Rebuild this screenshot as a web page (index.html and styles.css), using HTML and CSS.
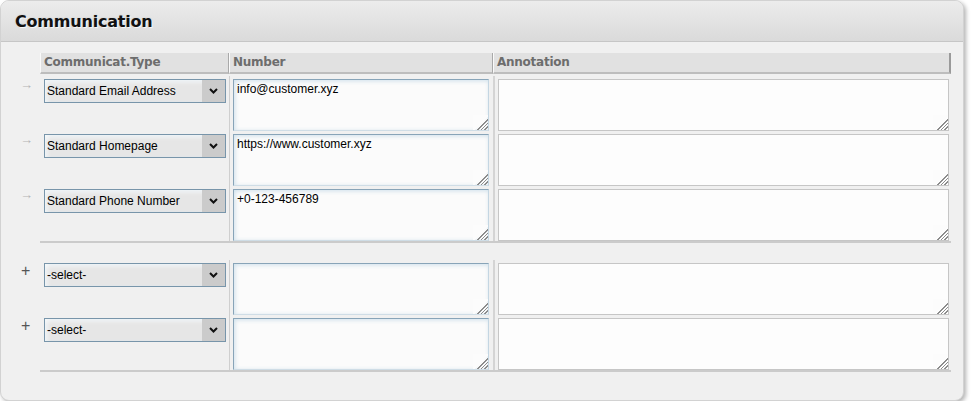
FILE: index.html
```html
<!DOCTYPE html>
<html>
<head>
<meta charset="utf-8">
<link rel="stylesheet" href="styles.css">
</head>
<body>
<div class="panel">
  <div class="panel-header"><h1 class="title">Communication</h1></div>
  <div class="panel-body">
    <div class="grid head">
      <div class="gutter"></div>
      <div class="hcell">Communicat.Type</div>
      <div class="hcell">Number</div>
      <div class="hcell last">Annotation</div>
    </div>

    <div class="group">
      <div class="grid row">
        <div class="gutter"><span class="arrow">&rarr;</span></div>
        <div class="c1"><div class="sel"><span class="sel-text">Standard Email Address</span><span class="sel-btn"><svg width="9" height="6" viewBox="0 0 9 6"><path d="M1 1 L4.5 4.5 L8 1" fill="none" stroke="#111" stroke-width="2"/></svg></span></div></div>
        <div class="c2"><textarea class="num">info@customer.xyz</textarea></div>
        <div class="c3"><textarea class="ann"></textarea></div>
      </div>
      <div class="grid row">
        <div class="gutter"><span class="arrow">&rarr;</span></div>
        <div class="c1"><div class="sel"><span class="sel-text">Standard Homepage</span><span class="sel-btn"><svg width="9" height="6" viewBox="0 0 9 6"><path d="M1 1 L4.5 4.5 L8 1" fill="none" stroke="#111" stroke-width="2"/></svg></span></div></div>
        <div class="c2"><textarea class="num">https://www.customer.xyz</textarea></div>
        <div class="c3"><textarea class="ann"></textarea></div>
      </div>
      <div class="grid row">
        <div class="gutter"><span class="arrow">&rarr;</span></div>
        <div class="c1"><div class="sel"><span class="sel-text">Standard Phone Number</span><span class="sel-btn"><svg width="9" height="6" viewBox="0 0 9 6"><path d="M1 1 L4.5 4.5 L8 1" fill="none" stroke="#111" stroke-width="2"/></svg></span></div></div>
        <div class="c2"><textarea class="num">+0-123-456789</textarea></div>
        <div class="c3"><textarea class="ann"></textarea></div>
      </div>
    </div>
    <div class="sep"></div>

    <div class="group second">
      <div class="grid row">
        <div class="gutter"><span class="plus">+</span></div>
        <div class="c1"><div class="sel"><span class="sel-text">-select-</span><span class="sel-btn"><svg width="9" height="6" viewBox="0 0 9 6"><path d="M1 1 L4.5 4.5 L8 1" fill="none" stroke="#111" stroke-width="2"/></svg></span></div></div>
        <div class="c2"><textarea class="num"></textarea></div>
        <div class="c3"><textarea class="ann"></textarea></div>
      </div>
      <div class="grid row">
        <div class="gutter"><span class="plus">+</span></div>
        <div class="c1"><div class="sel"><span class="sel-text">-select-</span><span class="sel-btn"><svg width="9" height="6" viewBox="0 0 9 6"><path d="M1 1 L4.5 4.5 L8 1" fill="none" stroke="#111" stroke-width="2"/></svg></span></div></div>
        <div class="c2"><textarea class="num"></textarea></div>
        <div class="c3"><textarea class="ann"></textarea></div>
      </div>
    </div>
    <div class="sep"></div>
  </div>
</div>
</body>
</html>
```

FILE: styles.css
```css
html, body {
  margin: 0;
  padding: 0;
  background: #ffffff;
}
body {
  font-family: "Liberation Sans", Arial, sans-serif;
  font-size: 12px;
}
.panel {
  width: 962px;
  height: 399px;
  background: #f0f0f0;
  border: 1px solid #d2d2d2;
  border-radius: 9px;
  box-shadow: 2px 2px 4px rgba(0,0,0,0.3);
  overflow: hidden;
}
.panel-header {
  height: 40px;
  border-bottom: 1px solid #c6c6c6;
  background: linear-gradient(#ececec, #dadada);
  display: flex;
  align-items: center;
  padding-left: 14px;
}
.title {
  margin: 0;
  padding-top: 1px;
  font-family: "DejaVu Sans", Verdana, sans-serif;
  font-weight: bold;
  font-size: 16px;
  letter-spacing: -0.2px;
  color: #111;
  text-shadow: 1px 1px 1px rgba(255,255,255,0.9), 0 0 2px rgba(0,0,0,0.15);
}
.panel-body {
  padding-top: 11px;
}
.grid {
  display: grid;
  grid-template-columns: 39px 189px 264px 458px;
}
.head {
  height: 21px;
}
.hcell {
  background: #e1e1e1;
  border-bottom: 2px solid #bdbdbd;
  border-right: 1px solid #a9a9a9;
  border-left: 1px solid #fafafa;
  font-family: "DejaVu Sans", Verdana, sans-serif;
  font-weight: bold;
  font-size: 12px;
  letter-spacing: -0.25px;
  color: #6d6d6d;
  padding-left: 3px;
  line-height: 18px;
  box-sizing: border-box;
}
.hcell.last {
  border-right: 2px solid #9a9a9a;
}
.group {
  padding-top: 2px;
}
.group.second {
  margin-top: 15px;
}
.row {
  height: 55px;
}
.gutter {
  position: relative;
}
.arrow {
  display: block;
  padding-left: 19px;
  padding-top: 1px;
  color: #b4b4b4;
  font-size: 13px;
  line-height: 16px;
}
.plus {
  display: block;
  padding-left: 20px;
  padding-top: 2px;
  color: #555;
  font-size: 16px;
  line-height: 18px;
}
.c1 {
  padding: 3px 0 0 4px;
}
.sel {
  box-sizing: border-box;
  width: 182px;
  height: 24px;
  border: 1px solid #7895aa;
  background: #e6e6e6;
  box-shadow: inset 2px 2px 4px rgba(255,255,255,0.9), inset 1px 1px 3px rgba(160,195,215,0.6);
  display: flex;
  align-items: center;
}
.sel-text {
  flex: 1;
  padding-left: 2px;
  color: #000;
  font-size: 12px;
}
.sel-btn {
  width: 23px;
  height: 100%;
  background: #cbcbcb;
  display: flex;
  align-items: center;
  justify-content: center;
}
.c2 {
  border-left: 1px solid #cfcfcf;
  padding: 3px 0 0 3px;
}
.c3 {
  border-left: 2px solid #d4d4d4;
  padding: 3px 0 0 3px;
}
textarea {
  display: block;
  box-sizing: border-box;
  height: 52px;
  margin: 0;
  font-family: "Liberation Sans", Arial, sans-serif;
  font-size: 12px;
  line-height: 14px;
  padding: 2px 3px;
  color: #000;
  outline: none;
}
textarea::-webkit-resizer {
  background:
    linear-gradient(135deg, #fcfcfc 0 55%, transparent 55%),
    repeating-linear-gradient(135deg, transparent 0 1.4px, #8c8c8c 1.4px 2.4px);
}
.num {
  width: 256px;
  background: #fbfbfb;
  border: 1px solid #88a4b8;
  border-right-color: #c4d6e2;
  border-bottom-color: #cfdde6;
  box-shadow: inset 1px 1px 4px rgba(150,190,215,0.45);
}
.ann {
  width: 451px;
  background: #fdfdfd;
  border: 1px solid #c6c6c6;
}
.sep {
  margin-left: 39px;
  width: 911px;
  height: 2px;
  background: #cbcbcb;
}
```
